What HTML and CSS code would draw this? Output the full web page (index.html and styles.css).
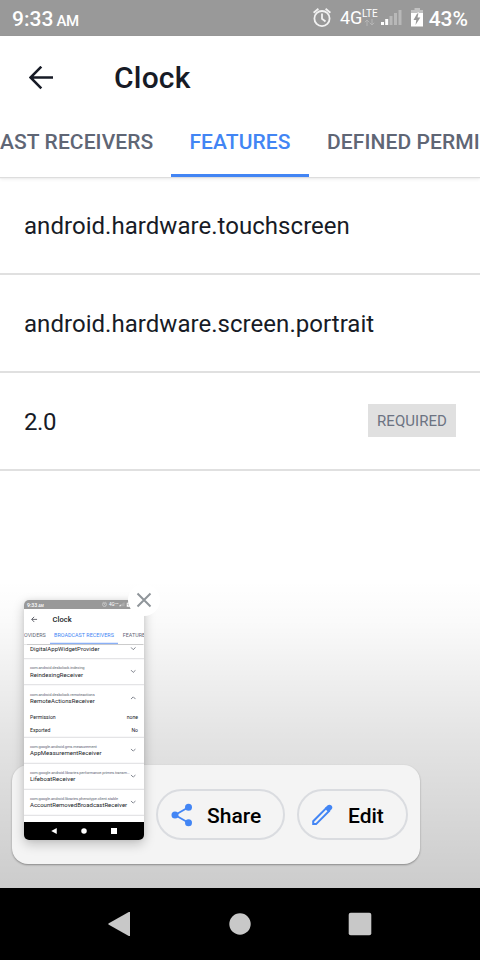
FILE: index.html
```html
<!DOCTYPE html>
<html lang="en">
<head>
<meta charset="utf-8">
<title>Clock</title>
<link rel="stylesheet" href="styles.css">
</head>
<body>
<svg width="0" height="0" class="defs">
  <symbol id="back" viewBox="0 0 24 24"><path d="M12.3.7 1.5 11.5l10.800 10.800M1.500 11.500H24" fill="none" stroke="#171b26" stroke-width="2.600"/></symbol>
  <symbol id="down" viewBox="0 0 20 12"><path d="m2 2 8 8 8-8" fill="none" stroke="#6b707c" stroke-width="3"/></symbol>
  <symbol id="signals" viewBox="0 0 118 36">
    <g fill="none" stroke="#f2f2f2" stroke-width="1.8"><circle cx="10" cy="18.6" r="7.6"/><path d="M10 13.5v5.3l3.5 2.700M1.600 12.800l4.800-4M18.400 12.800l-4.800-4"/></g>
    <path d="M55 26V20M52.800 22.200 55 20l2.200 2.200M60 19v6M57.800 22.800 60 25l2.200-2.200" stroke="#b5b5b5" fill="none"/>
    <path fill="#fff" d="M69 22h3v3h-3zM73.200 19h3v6h-3z"/>
    <path fill="#b8b8b8" d="M77.500 16h3v9h-3zM82 13h3v12h-3zM86.500 10h3v15h-3z"/>
    <path fill="#c2c2c2" d="M102.500 8h5.500v2h3v4H99v-4h3.500z"/>
    <path fill="#fff" fill-rule="evenodd" d="M99 13h12v13.500H99zM106 12l-4.500 8h2.800l-.8 5 4.800-7.500h-2.800l1.200-5.500z"/>
  </symbol>
</svg>
<div class="screen">
  <div class="status">
    <span class="time">9:33 <small>AM</small></span>
    <span class="right"><svg class="signals"><use href="#signals"/></svg><span class="net">4G</span><span class="lte">LTE</span><span class="pct">43%</span></span>
  </div>
  <header class="header">
    <div class="titlebar"><svg class="back"><use href="#back"/></svg><h1>Clock</h1></div>
    <nav class="tabs tabs-main"><span class="tab prev">AST RECEIVERS</span><span class="tab active">FEATURES</span><span class="tab next">DEFINED PERMISSIONS</span></nav>
  </header>
  <main class="list">
    <div class="row"><span>android.hardware.touchscreen</span></div>
    <div class="row"><span>android.hardware.screen.portrait</span></div>
    <div class="row"><span class="version">2.0</span><span class="badge">REQUIRED</span></div>
  </main>
  <div class="scrim"></div>
  <footer class="nav">
    <svg viewBox="0 0 24 24"><path d="M22 0v24h-1.200L.400 12.600v-1.200L20.800 0z"/></svg>
    <svg viewBox="0 0 24 24"><circle cx="12" cy="12" r="10.700"/></svg>
    <svg viewBox="0 0 24 24"><rect x=".7" y=".7" width="22.600" height="22.600" rx="2"/></svg>
  </footer>
  <div class="actions">
    <div class="pill share"><svg viewBox="0 0 24 24"><path d="M19.500 4.200 6 12l13.500 7.800" fill="none" stroke="#4285f4" stroke-width="1.800"/><g fill="#4285f4"><circle cx="19.500" cy="4.200" r="3.500"/><circle cx="6" cy="12" r="3.500"/><circle cx="19.500" cy="19.800" r="3.500"/></g></svg><span>Share</span></div>
    <div class="pill edit"><svg viewBox="0 0 24 24"><path d="M3.200 18.200 16 5.400l2.900 2.900L6.100 21.100H3.200z" fill="none" stroke="#4285f4" stroke-width="2"/><path d="m15.200 4.800 2.200-2.200c1.300-1.300 2.800-1.300 4 0 1.300 1.300 1.300 2.800 0 4l-2.200 2.200z" fill="#4285f4"/></svg><span>Edit</span></div>
  </div>
  <div class="thumb">
    <div class="mini">
      <div class="status">
        <span class="time">9:33 <small>AM</small></span>
        <span class="right"><svg class="signals"><use href="#signals"/></svg><span class="net">4G</span><span class="lte">LTE</span><span class="pct">43%</span></span>
      </div>
      <div class="header">
        <div class="titlebar"><svg class="back"><use href="#back"/></svg><h2>Clock</h2></div>
        <div class="tabs tabs-mini"><span class="tab prev">OVIDERS</span><span class="tab active">BROADCAST RECEIVERS</span><span class="tab next">FEATURES</span></div>
      </div>
      <div class="item cut"><div><b>DigitalAppWidgetProvider</b></div><svg><use href="#down"/></svg></div>
      <div class="item"><div><i>com.android.deskclock.indexing</i><b>ReindexingReceiver</b></div><svg><use href="#down"/></svg></div>
      <div class="item open"><div><i>com.android.deskclock.remoteactions</i><b>RemoteActionsReceiver</b></div><svg class="up"><use href="#down"/></svg></div>
      <div class="detail"><span>Permission</span><span>none</span></div>
      <div class="detail last"><span>Exported</span><span>No</span></div>
      <div class="item"><div><i>com.google.android.gms.measurement</i><b>AppMeasurementReceiver</b></div><svg><use href="#down"/></svg></div>
      <div class="item"><div><i class="long">com.google.android.libraries.performance.primes.transm…</i><b>LifeboatReceiver</b></div><svg><use href="#down"/></svg></div>
      <div class="item"><div><i class="mid">com.google.android.libraries.phenotype.client.stable</i><b class="wide">AccountRemovedBroadcastReceiver</b></div><svg><use href="#down"/></svg></div>
      <div class="nav mini-nav">
        <svg viewBox="0 0 24 24"><path d="M23 0v24L1 12z"/></svg>
        <svg viewBox="0 0 24 24"><circle cx="12" cy="12" r="11"/></svg>
        <svg viewBox="0 0 24 24"><path d="M0 0h24v24H0z"/></svg>
      </div>
    </div>
  </div>
  <div class="close"><svg viewBox="0 0 16 16"><path d="m1.500 1.500 13 13m0-13-13 13" fill="none" stroke="#8f959a" stroke-width="2"/></svg></div>
</div>
</body>
</html>
```
FILE: styles.css
```css
* { box-sizing: border-box; }
body { margin: 0; font-family: Roboto, sans-serif; color: #171b26; }
.defs { position: absolute; }
svg { display: block; flex: none; }
.screen { position: relative; width: 480px; height: 960px; overflow: hidden; background: #fff; display: flex; flex-direction: column; }

.status { height: 36px; flex: none; background: #999; color: #fff; display: flex; justify-content: space-between; align-items: center; padding: 1px 12px 0; font-weight: 500; }
.time { font-size: 21px; white-space: pre; }
.time small { font-size: 15px; margin-left: -2px; letter-spacing: -0.5px; }
.right { position: relative; width: 156px; height: 35px; display: flex; align-items: center; justify-content: flex-end; }
.signals { position: absolute; left: 0; top: -1px; width: 118px; height: 36px; }
.net { position: absolute; left: 28px; top: 6px; font-size: 18px; line-height: 21px; font-weight: 400; }
.lte { position: absolute; left: 50px; top: 7px; font-size: 10px; line-height: 12px; font-weight: 400; }
.pct { font-size: 21px; line-height: 35px; padding-top: 2px; }

.header { height: 141px; flex: none; background: #fff; position: relative; box-shadow: 0 1px 1px #ddd, 0 2px 4px rgba(0,0,0,.08); display: flex; flex-direction: column; }
.titlebar { height: 83px; display: flex; align-items: center; padding-left: 29px; }
.back { width: 24px; height: 24px; margin-right: 61px; }
h1, h2 { margin: 0; font-size: 30px; font-weight: 500; line-height: 40px; letter-spacing: 0.2px; }
.tabs { height: 58px; display: flex; overflow: hidden; white-space: nowrap; }
.tab { flex: none; height: 58px; font-size: 21px; line-height: 46px; font-weight: 500; letter-spacing: .1px; color: #5f6675; }
.tab.active { color: #4285f4; border-bottom: 3px solid #4285f4; text-align: center; }
.tabs-main .prev { width: 171px; }
.tabs-main .active { width: 138px; margin-right: 18px; }

.list { flex: 1; }
.row { height: 98px; padding: 2px 24px 0; border-bottom: 2px solid #e0e0e0; display: flex; align-items: center; justify-content: space-between; font-size: 24px; line-height: 30px; letter-spacing: .04px; }
.version { letter-spacing: -.4px; }
.badge { width: 88px; height: 33px; background: #e0e0e0; color: #6c7382; font-size: 15px; line-height: 34px; text-align: center; margin-top: -3px; }

.scrim { position: absolute; left: 0; right: 0; top: 580px; height: 308px; background: linear-gradient(rgba(0,0,0,0), rgba(0,0,0,.02) 13%, rgba(0,0,0,.11) 52%, rgba(0,0,0,.2)); }
.nav { position: relative; height: 72px; flex: none; background: #000; display: flex; justify-content: center; align-items: center; gap: 96px; }
.nav svg { width: 24px; height: 24px; fill: #c8c8c8; }

.actions { position: absolute; left: 12px; top: 765px; width: 408px; height: 99px; background: #f4f4f4; border-radius: 16px; box-shadow: 0 1px 2px rgba(0,0,0,.35); display: flex; align-items: center; gap: 12px; padding: 0 12px 0 144px; }
.pill { height: 51px; border: 2px solid #dadce0; border-radius: 26px; display: flex; align-items: center; padding-left: 11px; color: #000; font-size: 21px; font-weight: 500; }
.pill svg { width: 24px; height: 24px; margin-right: 14px; }
.pill span { padding-top: 2px; }
.share { width: 129px; }
.edit { width: 111px; }

.thumb { position: absolute; left: 24px; top: 600px; width: 120px; height: 240px; border-radius: 5px; overflow: hidden; background: #fff; box-shadow: 0 4px 12px rgba(0,0,0,.22), 0 0 5px rgba(0,0,0,.06); }
.mini { width: 480px; height: 960px; transform: scale(.25); transform-origin: 0 0; display: flex; flex-direction: column; }
.mini .header { z-index: 1; box-shadow: 0 2px 4px #bbb; }
.mini .tab { font-weight: 400; font-size: 21.5px; }
.tabs-mini .tab { border-bottom-color: #8ab0f7; border-bottom-width: 6px; }
.tabs-mini .prev { width: 104px; }
.tabs-mini .active { width: 272px; margin-right: 19px; }
.item { height: 104px; flex: none; border-bottom: 5px solid #e4e4e6; padding: 0 30px 3px 24px; display: flex; align-items: center; justify-content: space-between; }
.item svg { width: 24px; height: 14px; margin-right: 1px; }
.item .up { transform: rotate(180deg); }
.item > div { width: 396px; white-space: nowrap; }
.item b, .item i { display: block; font-style: normal; font-weight: 400; }
.item b { font-size: 24px; line-height: 28px; letter-spacing: .2px; }
.item .wide { letter-spacing: 0; }
.item i { font-size: 16px; line-height: 26px; letter-spacing: -.4px; color: #5f6675; }
.item .long { letter-spacing: -.35px; }
.item .mid { letter-spacing: -.4px; }
.cut { height: 60px; padding-bottom: 21px; }
.open { border: 0; }
.detail { height: 54px; flex: none; display: flex; justify-content: space-between; align-items: center; padding: 0 24px 4px; font-size: 20.5px; }
.detail.last { height: 53px; border-bottom: 5px solid #e4e4e6; }
.mini-nav { margin-top: auto; }
.mini-nav svg { fill: #fff; }
.close { position: absolute; left: 128px; top: 584px; width: 32px; height: 32px; border-radius: 50%; background: #fff; display: flex; align-items: center; justify-content: center; }
.close svg { width: 16px; height: 16px; }
```
